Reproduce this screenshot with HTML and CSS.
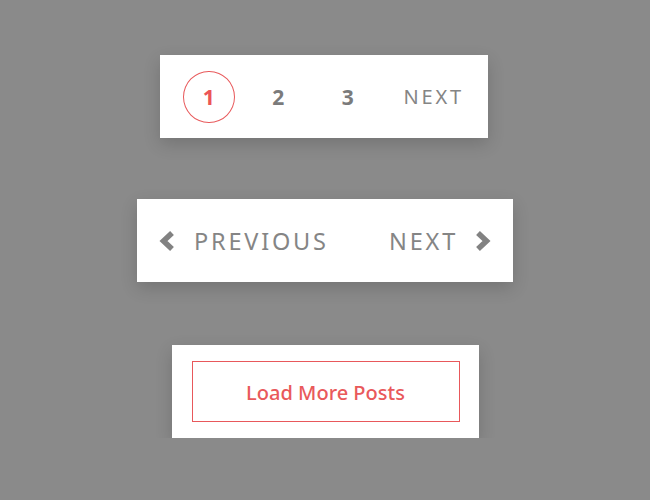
FILE: index.html
```html
<!DOCTYPE html>
<html lang="en">
<head>
    <meta charset="UTF-8">
    <meta name="viewport" content="width=device-width, initial-scale=1.0">
    <title>Pagination</title>
    <link rel="stylesheet" href="styles.css">
</head>
<body>
    <div class="stack">
        <!-- numbered pages -->
        <nav class="card pages">
            <a class="page current">1</a>
            <a class="page">2</a>
            <a class="page">3</a>
            <a class="word next-link">NEXT</a>
        </nav>

        <!-- previous / next -->
        <nav class="card prevnext">
            <a class="word big arrow-link">
                <svg class="chev" viewBox="0 0 16 22" width="16" height="22">
                    <polyline points="13,3 4.5,11 13,19" />
                </svg>
                <span class="prev-label">PREVIOUS</span>
            </a>
            <a class="word big arrow-link">
                <span class="next-label">NEXT</span>
                <svg class="chev" viewBox="0 0 16 22" width="16" height="22">
                    <polyline points="3,3 11.5,11 3,19" />
                </svg>
            </a>
        </nav>

        <!-- load more -->
        <div class="card more">
            <button class="load-btn">Load More Posts</button>
        </div>
    </div>
</body>
</html>
```

FILE: styles.css
```css
body {
    margin: 0;
    background-color: #8a8a8a;
    font-family: "Noto Sans", "Open Sans", sans-serif;
}
.stack {
    display: flex;
    flex-direction: column;
    align-items: center;
    gap: 61px;
    padding-top: 55px;
}
.card {
    background: white;
    box-shadow: 0 6px 16px rgba(0, 0, 0, 0.16);
    box-sizing: border-box;
    display: flex;
    align-items: center;
}
.pages {
    width: 328px;
    height: 83px;
    padding: 0 24px 0 23px;
    gap: 18px;
    margin-right: 2px;
}
.page {
    width: 52px;
    height: 52px;
    box-sizing: border-box;
    display: flex;
    align-items: center;
    justify-content: center;
    font-size: 21px;
    font-weight: 700;
    color: #7b7b7b;
}
.page.current {
    border: 1.5px solid #e85a5c;
    border-radius: 50%;
    color: #ec5557;
}
.word {
    font-size: 20px;
    letter-spacing: 2.8px;
    color: #858585;
}
.word.big {
    font-size: 23.5px;
    letter-spacing: 2.8px;
}
.next-link {
    margin-left: 12px;
}
.prevnext {
    width: 376px;
    height: 83px;
    padding: 0 22px 0 22px;
    justify-content: space-between;
}
.arrow-link {
    display: flex;
    align-items: center;
    gap: 19px;
}
.next-label {
    margin-right: -2px;
}
.chev {
    fill: none;
    stroke: #828282;
    stroke-width: 5.5;
}
.more {
    width: 307px;
    height: 93px;
    padding: 0 19px 0 20px;
    margin-top: 2px;
}
.load-btn {
    width: 268px;
    height: 61px;
    background: white;
    border: 1.5px solid #e8585b;
    color: #e9595b;
    font-family: "Noto Sans", "Open Sans", sans-serif;
    font-size: 20px;
    font-weight: 500;
    padding-top: 2px;
    cursor: pointer;
}
```
